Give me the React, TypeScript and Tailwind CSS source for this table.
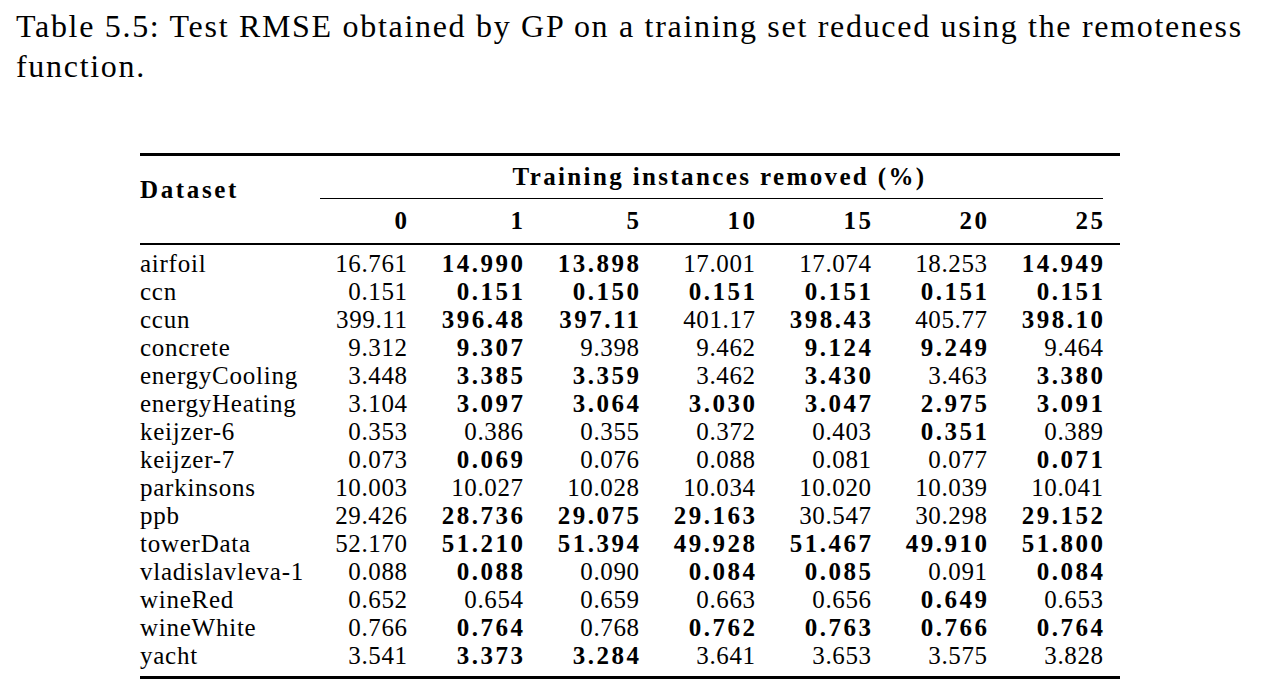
const columns = ['0', '1', '5', '10', '15', '20', '25'];

// a leading * marks a bold (best) value
const rows: [string, string[]][] = [
  ['airfoil', ['16.761', '*14.990', '*13.898', '17.001', '17.074', '18.253', '*14.949']],
  ['ccn', ['0.151', '*0.151', '*0.150', '*0.151', '*0.151', '*0.151', '*0.151']],
  ['ccun', ['399.11', '*396.48', '*397.11', '401.17', '*398.43', '405.77', '*398.10']],
  ['concrete', ['9.312', '*9.307', '9.398', '9.462', '*9.124', '*9.249', '9.464']],
  ['energyCooling', ['3.448', '*3.385', '*3.359', '3.462', '*3.430', '3.463', '*3.380']],
  ['energyHeating', ['3.104', '*3.097', '*3.064', '*3.030', '*3.047', '*2.975', '*3.091']],
  ['keijzer-6', ['0.353', '0.386', '0.355', '0.372', '0.403', '*0.351', '0.389']],
  ['keijzer-7', ['0.073', '*0.069', '0.076', '0.088', '0.081', '0.077', '*0.071']],
  ['parkinsons', ['10.003', '10.027', '10.028', '10.034', '10.020', '10.039', '10.041']],
  ['ppb', ['29.426', '*28.736', '*29.075', '*29.163', '30.547', '30.298', '*29.152']],
  ['towerData', ['52.170', '*51.210', '*51.394', '*49.928', '*51.467', '*49.910', '*51.800']],
  ['vladislavleva-1', ['0.088', '*0.088', '0.090', '*0.084', '*0.085', '0.091', '*0.084']],
  ['wineRed', ['0.652', '0.654', '0.659', '0.663', '0.656', '*0.649', '0.653']],
  ['wineWhite', ['0.766', '*0.764', '0.768', '*0.762', '*0.763', '*0.766', '*0.764']],
  ['yacht', ['3.541', '*3.373', '*3.284', '3.641', '3.653', '3.575', '3.828']],
];

function Cell({ value }: { value: string }) {
  const bold = value.startsWith('*');
  const text = bold ? value.slice(1) : value;
  return (
    <div className="text-right">
      {bold ? (
        <span className="font-bold tracking-[0.1em] mr-[-0.1em]">{text}</span>
      ) : (
        <span className="tracking-[0.025em] mr-[-0.025em]">{text}</span>
      )}
    </div>
  );
}

export default function App() {
  return (
    <div className="min-h-screen bg-white text-black font-['Liberation_Serif',serif]">
      <div className="pl-[16px] pt-[6px] text-[32px] leading-[40px] tracking-[0.053em]">
        <div className="whitespace-nowrap">
          Table 5.5: Test RMSE obtained by GP on a training set reduced using the remoteness
        </div>
        <div>function.</div>
      </div>

      <div className="ml-[140px] mt-[67px] w-[980px] text-[25px] leading-[28px]">
        <div className="h-[3px] bg-black" />

        <div className="grid grid-cols-[151px_repeat(7,116px)]">
          <div className="row-span-2 pt-[20px] font-bold tracking-[0.105em]">Dataset</div>
          <div className="col-span-7">
            <div className="pt-[7px] pb-[7px] pl-[45px] text-center font-bold tracking-[0.095em] whitespace-nowrap">
              Training instances removed (%)
            </div>
            <div className="ml-[29px] h-px bg-black" />
          </div>
          {columns.map((c) => (
            <div key={c} className="pt-[8px] pb-[8px] text-right font-bold">
              <span className="tracking-[0.1em] mr-[-0.1em]">{c}</span>
            </div>
          ))}
        </div>

        <div className="h-[1.5px] bg-black" />

        <div className="pt-[5px] pb-[6px]">
          {rows.map(([name, values]) => (
            <div key={name} className="grid grid-cols-[151px_repeat(7,116px)]">
              <div className="whitespace-nowrap tracking-[0.03em]">{name}</div>
              {values.map((v, i) => (
                <Cell key={i} value={v} />
              ))}
            </div>
          ))}
        </div>

        <div className="h-[3px] bg-black" />
      </div>
    </div>
  );
}
